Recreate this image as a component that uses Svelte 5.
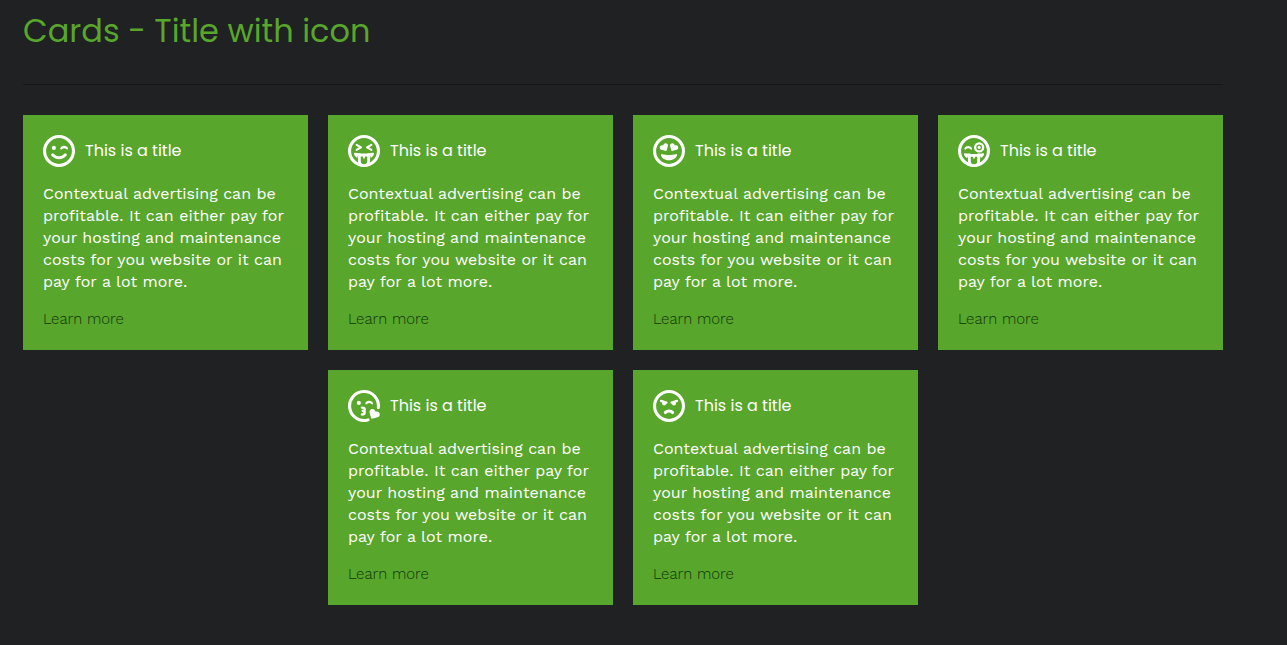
<script lang="ts">
    type Icon = 'wink' | 'squint' | 'hearts' | 'tongue' | 'kiss' | 'angry';

    const icons: Icon[] = ['wink', 'squint', 'hearts', 'tongue', 'kiss', 'angry'];

    const cards = icons.map((icon) => ({
        icon,
        title: 'This is a title',
        text: 'Contextual advertising can be profitable. It can either pay for your hosting and maintenance costs for you website or it can pay for a lot more.'
    }));
</script>

{#snippet face(icon: Icon)}
    <svg class="icon" viewBox="0 0 496 496" aria-hidden="true">
        {#if icon === 'kiss'}
            <path class="line thick" d="M312 463A224 224 0 1 1 471 272" />
        {:else}
            <circle class="line thick" cx="248" cy="248" r="224" />
        {/if}

        {#if icon === 'wink'}
            <circle cx="168" cy="200" r="32" />
            <path d="M328 168c-26 0-56 17-60 42-2 11 12 18 20 15l10-9c15-13 46-13 61 0l10 9c8 3 21-4 19-15-4-25-34-42-60-42z" />
            <path class="line thick" d="M151 308c26 31 57 44 97 44s71-13 97-44" />
        {:else if icon === 'squint'}
            <path class="line eyes" d="M134 152l66 40-66 40M362 152l-66 40 66 40" />
            <path class="line tongue" d="M176 310v94a72 72 0 0 0 144 0v-94" />
            <path d="M110 274c-10-3-19 5-18 15 5 31 26 50 54 66v-20h82l20 44 20-44h82v20c28-16 49-35 54-66 1-10-8-18-18-15-74 16-202 16-276 0z" />
        {:else if icon === 'hearts'}
            <path d="M201 248c5 1 9-2 10-6l20-70c6-20-7-41-29-45-18-3-36 9-41 27l-2 7-7-2c-18-4-38 5-45 22-8 21 4 42 24 48z" />
            <path d="M295 248c-5 1-9-2-10-6l-20-70c-6-20 7-41 29-45 18-3 36 9 41 27l2 7 7-2c18-4 38 5 45 22 8 21-4 42-24 48z" />
            <path d="M354 297c-26 8-65 13-106 13s-80-5-106-13c-10-3-19 5-18 15 8 47 72 80 124 80s116-33 124-80c1-10-8-18-18-15z" />
        {:else if icon === 'tongue'}
            <path d="M158 172c-26 0-56 17-60 42-2 11 12 18 20 11l10-9c15-13 46-13 61 0l10 9c8 7 21 0 19-11-4-25-34-42-60-42z" />
            <circle class="line" cx="328" cy="192" r="62" />
            <circle cx="328" cy="192" r="24" />
            <path class="line tongue" d="M176 310v94a72 72 0 0 0 144 0v-94" />
            <path d="M110 282c-10-3-19 5-18 15 5 31 26 46 54 62v-20h82l20 36 20-36h82v20c28-16 49-31 54-62 1-10-8-18-18-15-74 16-202 16-276 0z" />
        {:else if icon === 'kiss'}
            <circle cx="168" cy="200" r="32" />
            <path d="M328 168c-26 0-56 17-60 42-2 11 12 18 20 11l10-9c15-13 46-13 61 0l10 9c8 7 21 0 19-11-4-25-34-42-60-42z" />
            <path class="line" d="M216 274c52 0 62 46 12 50 50 4 40 54-12 56" />
            <path d="M490 363c-9-22-34-33-56-27l-9 2-2-9c-6-22-29-37-52-33-26 4-43 30-36 55l24 88c2 6 8 9 14 7l86-22c26-7 41-35 31-61z" />
        {:else}
            <path class="line" d="M124 168l84 28M372 168l-84 28" />
            <circle cx="172" cy="210" r="32" />
            <circle cx="324" cy="210" r="32" />
            <path class="line thick" d="M192 350c28-34 84-34 112 0" />
        {/if}
    </svg>
{/snippet}

<main class="page">
    <h1>Cards - Title with icon</h1>
    <hr />

    <div class="cards">
        {#each cards as card}
            <article class="card">
                <header class="card-header">
                    {@render face(card.icon)}
                    <h2>{card.title}</h2>
                </header>
                <p>{card.text}</p>
                <a href="#learn-more">Learn more</a>
            </article>
        {/each}
    </div>
</main>

<style>
    :global(body) {
        margin: 0;
        background: #1f2122;
    }

    .page {
        padding: 7px 64px 40px 23px;
        font-family: 'Work Sans', Inter, sans-serif;
        font-size: 16px;
        line-height: 22px;
        color: #fff;
    }

    h1 {
        margin: 0;
        font-family: Poppins, Inter, sans-serif;
        font-size: 32px;
        font-weight: 400;
        line-height: 48px;
        color: #58a62b;
    }

    hr {
        height: 1px;
        margin: 29px 0 30px;
        border: 0;
        background: #151617;
    }

    .cards {
        display: flex;
        flex-wrap: wrap;
        justify-content: center;
        gap: 20px;
    }

    .card {
        box-sizing: border-box;
        width: calc((100% - 60px) / 4);
        min-width: 260px;
        padding: 20px;
        background: #58a62b;
    }

    .card-header {
        display: flex;
        align-items: center;
        gap: 10px;
    }

    h2 {
        margin: 0;
        font-family: Poppins, Inter, sans-serif;
        font-size: 16px;
        font-weight: 400;
    }

    p {
        margin: 16px 0 15px;
    }

    a {
        display: block;
        font-size: 15px;
        font-weight: 300;
        color: #0d3508;
        text-decoration: none;
    }

    .icon {
        flex: none;
        width: 32px;
        height: 32px;
        fill: currentColor;
    }

    .line {
        fill: none;
        stroke: currentColor;
        stroke-width: 36;
        stroke-linecap: round;
        stroke-linejoin: round;
    }

    .thick {
        stroke-width: 48;
    }

    .eyes {
        stroke-width: 32;
    }

    .tongue {
        fill: #58a62b;
        stroke-width: 44;
    }
</style>
